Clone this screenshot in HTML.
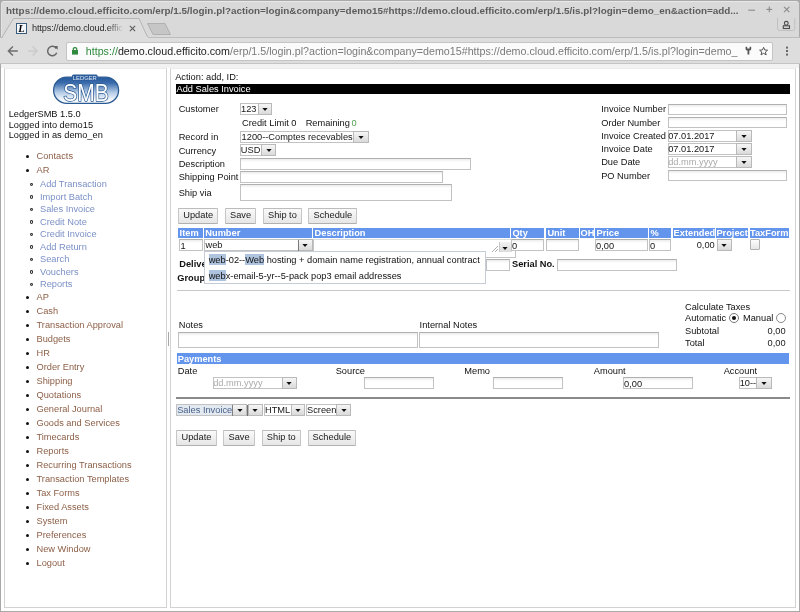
<!DOCTYPE html>
<html><head><meta charset="utf-8"><style>
html,body{margin:0;padding:0;width:800px;height:612px;overflow:hidden;background:#fff}
body{position:relative;font-family:"Liberation Sans",sans-serif}
.r{position:absolute}
.t{position:absolute;white-space:nowrap;line-height:1;font-family:"Liberation Sans",sans-serif}
.hl{background:#aec3de;padding:1px 0 0}
</style></head><body><div id="w" style="position:absolute;left:0;top:0;width:800px;height:612px;will-change:transform">
<div class="r" style="left:0px;top:0px;width:800px;height:64px;background:#a9a9a9"></div>
<div class="r" style="left:0px;top:0px;width:800px;height:64px;background:#d9d9d9;border:1px solid #a9a9a9;border-bottom:0;border-radius:4px 4px 0 0;box-sizing:border-box;box-shadow:inset 0 1px 0 #e8e8e8, inset 1px 0 0 #e2e2e2"></div>
<div class="r" style="left:0px;top:0px;width:1px;height:612px;background:#a9a9a9"></div>
<div class="r" style="left:799px;top:0px;width:1px;height:612px;background:#a9a9a9"></div>
<div class="t" style="left:6px;top:6.02px;font-size:9.88px;color:#5c5c5c;font-weight:bold;">https://demo.cloud.efficito.com/erp/1.5/login.pl?action=login&amp;company=demo15#https://demo.cloud.efficito.com/erp/1.5/is.pl?login=demo_en&amp;action=add...</div>
<svg class="r" style="left:740px;top:0px" width="60" height="40" viewBox="740 0 60 40">
<g stroke="#8a8a8a" stroke-width="1.1" fill="none">
<line x1="748.3" y1="10.2" x2="755" y2="10.2"/>
<line x1="769.3" y1="6.6" x2="769.3" y2="12.2"/><line x1="766.4" y1="9.4" x2="772.2" y2="9.4"/>
<line x1="784" y1="6.8" x2="789.4" y2="12.1"/><line x1="789.4" y1="6.8" x2="784" y2="12.1"/>
</g>
<path d="M777.5 18 V28.5 Q777.5 30.5 779.5 30.5 H792.8 Q794.8 30.5 794.8 28.5 V18" fill="none" stroke="#bdbdbd" stroke-width="0.9"/>
<circle cx="786.3" cy="23.3" r="1.9" fill="none" stroke="#4a4a4a" stroke-width="1.1"/>
<rect x="783.3" y="25.8" width="6.2" height="2.7" fill="none" stroke="#4a4a4a" stroke-width="1.1"/>
</svg>
<svg class="r" style="left:0;top:17px" width="800" height="21" viewBox="0 17 800 21">
<path d="M1.5 38 L13.5 18.5 L139 18.5 L148 38" fill="#dddddd" stroke="#b4b4b4" stroke-width="1"/>
<path d="M147.5 23.5 L165 23.5 L170.5 34.5 L153 34.5 Z" fill="#c6c6c6" stroke="#b0b0b0" stroke-width="1"/>
</svg>
<div class="r" style="left:16px;top:23px;width:11px;height:11px;background:#f4f8fc;border:1px solid #3b5b7a;box-sizing:border-box"></div>
<div class="t" style="left:18.2px;top:23.85px;font-size:10.5px;color:#000;font-weight:bold;font-family:'Liberation Serif';font-style:italic">L</div>
<div class="t" style="left:32px;top:23.54px;font-size:9.2px;color:#2a2a2a;letter-spacing:-0.15px;width:92px;height:12px;overflow:hidden;-webkit-mask-image:linear-gradient(90deg,#000 82%,transparent)">https://demo.cloud.effic</div>
<svg class="r" style="left:128px;top:24px" width="10" height="10" viewBox="0 0 10 10">
<g stroke="#5a5a5a" stroke-width="1.1"><line x1="1.9" y1="1.9" x2="7.1" y2="7.1"/><line x1="7.1" y1="1.9" x2="1.9" y2="7.1"/></g></svg>
<div class="r" style="left:0px;top:37px;width:800px;height:27px;background:#dddddd"></div>
<div class="r" style="left:0px;top:37px;width:3px;height:1px;background:#bdbdbd"></div>
<div class="r" style="left:148px;top:37px;width:652px;height:1px;background:#bdbdbd"></div>
<div class="r" style="left:0px;top:63px;width:800px;height:1px;background:#c4c4c4"></div>
<svg class="r" style="left:0;top:40px" width="64" height="22" viewBox="0 40 64 22">
<g fill="none" stroke-width="1.5" stroke-linecap="butt">
<path d="M8.8 51 H17.8 M12.9 46.4 L8.4 51 L12.9 55.6" stroke="#6e6e6e"/>
<path d="M28 51 H37 M32.6 46.4 L37.1 51 L32.6 55.6" stroke="#cbcbcb"/>
<path d="M56.3 48.5 A4.7 4.7 0 1 0 56.7 52.8" stroke="#666"/>
</g>
<path d="M53.9 45.9 L57.7 45.9 L57.7 49.7 Z" fill="#666"/>
</svg>
<div class="r" style="left:65.5px;top:41.5px;width:707.5px;height:19.0px;background:#fbfbfb;border:1px solid #c4c4c4;box-sizing:border-box;border-radius:2px"></div>
<svg class="r" style="left:70px;top:45px" width="10" height="11" viewBox="0 0 10 11">
<path d="M3.3 5 V3.6 A1.9 1.9 0 0 1 6.7 3.6 V5" fill="none" stroke="#2f8a3e" stroke-width="1.2"/>
<rect x="2" y="5" width="6" height="4.6" fill="#2f8a3e"/></svg>
<div class="t" style="left:85.8px;top:45.70px;font-size:10.7px;color:#777;width:654px;height:14px;overflow:hidden"><span style="color:#2f8a3e">https://</span><span style="color:#222">demo.cloud.efficito.com</span><span style="color:#7a7a7a">/erp/1.5/login.pl?action=login&amp;company=demo15#https://demo.cloud.efficito.com/erp/1.5/is.pl?login=demo_</span></div>
<svg class="r" style="left:736px;top:40px" width="64" height="22" viewBox="736 40 64 22">
<path d="M745.6 46.8 H747.2 V48.6 H749.6 V46.8 H751.2 V49.2 Q751.2 50.6 749.3 50.6 V54.6 H747.5 V50.6 Q745.6 50.6 745.6 49.2 Z" fill="#555"/>
<path d="M763.6 47.3 L764.8 50 L767.6 50.2 L765.4 52 L766.2 54.9 L763.6 53.3 L761 54.9 L761.8 52 L759.6 50.2 L762.4 50 Z" fill="none" stroke="#555" stroke-width="1" stroke-linejoin="miter"/>
<rect x="786" y="46.6" width="2" height="2" fill="#666"/><rect x="786" y="50" width="2" height="2" fill="#666"/><rect x="786" y="53.6" width="2" height="2" fill="#666"/>
</svg>
<div class="r" style="left:1px;top:64px;width:798px;height:547px;background:#fff"></div>
<div class="r" style="left:1px;top:64px;width:798px;height:4px;background:#f2f2f2"></div>
<div class="r" style="left:1px;top:611px;width:798px;height:1px;background:#a9a9a9"></div>
<div class="r" style="left:4px;top:68px;width:163px;height:540px;border:1px solid #d2d2d2;border-top-color:#ececec;box-sizing:border-box;background:#fff"></div>
<div class="r" style="left:170px;top:68px;width:626px;height:540px;border:1px solid #d2d2d2;border-top-color:#ececec;box-sizing:border-box;background:#fff"></div>
<div class="r" style="left:168px;top:332px;width:1px;height:14px;background:#a8a8a8"></div>
<svg class="r" style="left:50px;top:70px" width="72" height="36" viewBox="50 70 72 36">
<defs><linearGradient id="lg" x1="0" y1="0" x2="0" y2="1">
<stop offset="0" stop-color="#26599a"/><stop offset="0.22" stop-color="#3a6cad"/><stop offset="0.58" stop-color="#b3cbe6"/><stop offset="0.85" stop-color="#f2f6fb"/><stop offset="1" stop-color="#fafcfe"/></linearGradient></defs>
<rect x="53.6" y="77.2" width="65" height="26.2" rx="13.1" fill="url(#lg)" stroke="#2a5a92" stroke-width="1.3"/>
<path d="M72 80.5 V76 Q72 74.5 73.5 74.5 H96.2 Q97.7 74.5 97.7 76 V80.5 Z" fill="#2c5d9b"/>
<text x="72.8" y="79.9" textLength="24" lengthAdjust="spacingAndGlyphs" font-family="Liberation Sans" font-size="5.6" fill="#dce8f6">LEDGER</text>
<text x="63.2" y="100.6" textLength="45.5" lengthAdjust="spacingAndGlyphs" font-family="Liberation Sans" font-size="23.5" fill="#2a5a92" stroke="#2a5a92" stroke-width="1.5" stroke-linejoin="round">SMB</text><text x="63.2" y="100.6" textLength="45.5" lengthAdjust="spacingAndGlyphs" font-family="Liberation Sans" font-size="23.5" fill="#fff">SMB</text>
</svg>
<div class="t" style="left:8.7px;top:110.00px;font-size:9.25px;color:#111;">LedgerSMB 1.5.0</div>
<div class="t" style="left:8.7px;top:121.00px;font-size:9.25px;color:#111;">Logged into demo15</div>
<div class="t" style="left:8.7px;top:131.30px;font-size:9.25px;color:#111;">Logged in as demo_en</div>
<div class="r" style="left:25.5px;top:154.8px;width:3.0px;height:3.0px;background:#111;border-radius:50%"></div>
<div class="t" style="left:36.5px;top:152.00px;font-size:9.25px;color:#8c5f47;">Contacts</div>
<div class="r" style="left:25.5px;top:168.8px;width:3.0px;height:3.0px;background:#111;border-radius:50%"></div>
<div class="t" style="left:36.5px;top:166.00px;font-size:9.25px;color:#8c5f47;">AR</div>
<div class="r" style="left:29.5px;top:182.8px;width:3.700000000000003px;height:3.5999999999999943px;border:1px solid #333;border-radius:50%;box-sizing:border-box"></div>
<div class="t" style="left:40px;top:180.00px;font-size:9.25px;color:#7b90c6;">Add Transaction</div>
<div class="r" style="left:29.5px;top:195.3px;width:3.700000000000003px;height:3.5999999999999943px;border:1px solid #333;border-radius:50%;box-sizing:border-box"></div>
<div class="t" style="left:40px;top:192.50px;font-size:9.25px;color:#7b90c6;">Import Batch</div>
<div class="r" style="left:29.5px;top:207.8px;width:3.700000000000003px;height:3.5999999999999943px;border:1px solid #333;border-radius:50%;box-sizing:border-box"></div>
<div class="t" style="left:40px;top:205.00px;font-size:9.25px;color:#7b90c6;">Sales Invoice</div>
<div class="r" style="left:29.5px;top:220.3px;width:3.700000000000003px;height:3.5999999999999943px;border:1px solid #333;border-radius:50%;box-sizing:border-box"></div>
<div class="t" style="left:40px;top:217.50px;font-size:9.25px;color:#7b90c6;">Credit Note</div>
<div class="r" style="left:29.5px;top:232.8px;width:3.700000000000003px;height:3.5999999999999943px;border:1px solid #333;border-radius:50%;box-sizing:border-box"></div>
<div class="t" style="left:40px;top:230.00px;font-size:9.25px;color:#7b90c6;">Credit Invoice</div>
<div class="r" style="left:29.5px;top:245.3px;width:3.700000000000003px;height:3.5999999999999943px;border:1px solid #333;border-radius:50%;box-sizing:border-box"></div>
<div class="t" style="left:40px;top:242.50px;font-size:9.25px;color:#7b90c6;">Add Return</div>
<div class="r" style="left:29.5px;top:257.8px;width:3.700000000000003px;height:3.599999999999966px;border:1px solid #333;border-radius:50%;box-sizing:border-box"></div>
<div class="t" style="left:40px;top:255.00px;font-size:9.25px;color:#7b90c6;">Search</div>
<div class="r" style="left:29.5px;top:270.3px;width:3.700000000000003px;height:3.599999999999966px;border:1px solid #333;border-radius:50%;box-sizing:border-box"></div>
<div class="t" style="left:40px;top:267.50px;font-size:9.25px;color:#7b90c6;">Vouchers</div>
<div class="r" style="left:29.5px;top:282.8px;width:3.700000000000003px;height:3.599999999999966px;border:1px solid #333;border-radius:50%;box-sizing:border-box"></div>
<div class="t" style="left:40px;top:280.00px;font-size:9.25px;color:#7b90c6;">Reports</div>
<div class="r" style="left:25.5px;top:296.1px;width:3.0px;height:3.0px;background:#111;border-radius:50%"></div>
<div class="t" style="left:36.5px;top:293.30px;font-size:9.25px;color:#8c5f47;">AP</div>
<div class="r" style="left:25.5px;top:310.07000000000005px;width:3.0px;height:3.0px;background:#111;border-radius:50%"></div>
<div class="t" style="left:36.5px;top:307.27px;font-size:9.25px;color:#8c5f47;">Cash</div>
<div class="r" style="left:25.5px;top:324.04px;width:3.0px;height:3.0px;background:#111;border-radius:50%"></div>
<div class="t" style="left:36.5px;top:321.24px;font-size:9.25px;color:#8c5f47;">Transaction Approval</div>
<div class="r" style="left:25.5px;top:338.01000000000005px;width:3.0px;height:3.0px;background:#111;border-radius:50%"></div>
<div class="t" style="left:36.5px;top:335.21px;font-size:9.25px;color:#8c5f47;">Budgets</div>
<div class="r" style="left:25.5px;top:351.98px;width:3.0px;height:3.0px;background:#111;border-radius:50%"></div>
<div class="t" style="left:36.5px;top:349.18px;font-size:9.25px;color:#8c5f47;">HR</div>
<div class="r" style="left:25.5px;top:365.95000000000005px;width:3.0px;height:3.0px;background:#111;border-radius:50%"></div>
<div class="t" style="left:36.5px;top:363.15px;font-size:9.25px;color:#8c5f47;">Order Entry</div>
<div class="r" style="left:25.5px;top:379.92px;width:3.0px;height:3.0px;background:#111;border-radius:50%"></div>
<div class="t" style="left:36.5px;top:377.12px;font-size:9.25px;color:#8c5f47;">Shipping</div>
<div class="r" style="left:25.5px;top:393.89000000000004px;width:3.0px;height:3.0px;background:#111;border-radius:50%"></div>
<div class="t" style="left:36.5px;top:391.09px;font-size:9.25px;color:#8c5f47;">Quotations</div>
<div class="r" style="left:25.5px;top:407.86px;width:3.0px;height:3.0px;background:#111;border-radius:50%"></div>
<div class="t" style="left:36.5px;top:405.06px;font-size:9.25px;color:#8c5f47;">General Journal</div>
<div class="r" style="left:25.5px;top:421.83000000000004px;width:3.0px;height:3.0px;background:#111;border-radius:50%"></div>
<div class="t" style="left:36.5px;top:419.03px;font-size:9.25px;color:#8c5f47;">Goods and Services</div>
<div class="r" style="left:25.5px;top:435.8px;width:3.0px;height:3.0px;background:#111;border-radius:50%"></div>
<div class="t" style="left:36.5px;top:433.00px;font-size:9.25px;color:#8c5f47;">Timecards</div>
<div class="r" style="left:25.5px;top:449.77000000000004px;width:3.0px;height:3.0px;background:#111;border-radius:50%"></div>
<div class="t" style="left:36.5px;top:446.97px;font-size:9.25px;color:#8c5f47;">Reports</div>
<div class="r" style="left:25.5px;top:463.74000000000007px;width:3.0px;height:3.0px;background:#111;border-radius:50%"></div>
<div class="t" style="left:36.5px;top:460.94px;font-size:9.25px;color:#8c5f47;">Recurring Transactions</div>
<div class="r" style="left:25.5px;top:477.71000000000004px;width:3.0px;height:3.0px;background:#111;border-radius:50%"></div>
<div class="t" style="left:36.5px;top:474.91px;font-size:9.25px;color:#8c5f47;">Transaction Templates</div>
<div class="r" style="left:25.5px;top:491.68px;width:3.0px;height:3.0px;background:#111;border-radius:50%"></div>
<div class="t" style="left:36.5px;top:488.88px;font-size:9.25px;color:#8c5f47;">Tax Forms</div>
<div class="r" style="left:25.5px;top:505.65000000000003px;width:3.0px;height:3.0px;background:#111;border-radius:50%"></div>
<div class="t" style="left:36.5px;top:502.85px;font-size:9.25px;color:#8c5f47;">Fixed Assets</div>
<div class="r" style="left:25.5px;top:519.62px;width:3.0px;height:3.0px;background:#111;border-radius:50%"></div>
<div class="t" style="left:36.5px;top:516.82px;font-size:9.25px;color:#8c5f47;">System</div>
<div class="r" style="left:25.5px;top:533.5899999999999px;width:3.0px;height:3.0px;background:#111;border-radius:50%"></div>
<div class="t" style="left:36.5px;top:530.79px;font-size:9.25px;color:#8c5f47;">Preferences</div>
<div class="r" style="left:25.5px;top:547.56px;width:3.0px;height:3.0px;background:#111;border-radius:50%"></div>
<div class="t" style="left:36.5px;top:544.76px;font-size:9.25px;color:#8c5f47;">New Window</div>
<div class="r" style="left:25.5px;top:561.53px;width:3.0px;height:3.0px;background:#111;border-radius:50%"></div>
<div class="t" style="left:36.5px;top:558.73px;font-size:9.25px;color:#8c5f47;">Logout</div>
<div class="t" style="left:175.2px;top:73.30px;font-size:9.25px;color:#111;">Action: add, ID:</div>
<div class="r" style="left:176px;top:84px;width:614px;height:10px;background:#000"></div>
<div class="t" style="left:176.5px;top:85.30px;font-size:9.25px;color:#fff;">Add Sales Invoice</div>
<div class="t" style="left:178.7px;top:105.30px;font-size:9.25px;color:#111;">Customer</div>
<div class="r" style="left:240px;top:103px;width:32px;height:12px;border:1px solid #c2c2c2;box-sizing:border-box;background:#fff"></div>
<div class="r" style="left:257.5px;top:103px;width:14.5px;height:12px;border:1px solid #b9b9b9;box-sizing:border-box;background:linear-gradient(#f6f6f6,#dadada)"></div>
<svg class="r" style="left:260.75px;top:105.00px" width="8" height="8" viewBox="0 0 8 8"><path d="M1.4 3.1 H6.6 L4 6.1 Z" fill="#111"/></svg>
<div class="t" style="left:241.0px;top:105.40px;font-size:9.25px;color:#161616;">123</div>
<div class="t" style="left:242px;top:119.00px;font-size:9.25px;color:#111;">Credit Limit 0</div>
<div class="t" style="left:305.7px;top:119.00px;font-size:9.25px;color:#111;">Remaining<span style="color:#4f9f4f;margin-left:1.6px">0</span></div>
<div class="t" style="left:178.7px;top:133.00px;font-size:9.25px;color:#111;">Record in</div>
<div class="r" style="left:240px;top:131px;width:128.7px;height:12px;border:1px solid #c2c2c2;box-sizing:border-box;background:#fff"></div>
<div class="r" style="left:353px;top:131px;width:15.699999999999989px;height:12px;border:1px solid #b9b9b9;box-sizing:border-box;background:linear-gradient(#f6f6f6,#dadada)"></div>
<svg class="r" style="left:356.85px;top:133.00px" width="8" height="8" viewBox="0 0 8 8"><path d="M1.4 3.1 H6.6 L4 6.1 Z" fill="#111"/></svg>
<div class="t" style="left:241.6px;top:133.40px;font-size:9.25px;color:#161616;">1200--Comptes recevables</div>
<div class="t" style="left:178.7px;top:146.70px;font-size:9.25px;color:#111;">Currency</div>
<div class="r" style="left:240px;top:144px;width:36px;height:12px;border:1px solid #c2c2c2;box-sizing:border-box;background:#fff"></div>
<div class="r" style="left:261px;top:144px;width:15px;height:12px;border:1px solid #b9b9b9;box-sizing:border-box;background:linear-gradient(#f6f6f6,#dadada)"></div>
<svg class="r" style="left:264.50px;top:146.00px" width="8" height="8" viewBox="0 0 8 8"><path d="M1.4 3.1 H6.6 L4 6.1 Z" fill="#111"/></svg>
<div class="t" style="left:240.8px;top:146.40px;font-size:9.25px;color:#161616;">USD</div>
<div class="t" style="left:178.7px;top:160.00px;font-size:9.25px;color:#111;">Description</div>
<div class="r" style="left:240px;top:158px;width:231px;height:12px;border:1px solid #c2c2c2;border-top-color:#b0b0b0;box-sizing:border-box;background:linear-gradient(#ececec,#fff 3px);"></div>
<div class="t" style="left:178.7px;top:172.60px;font-size:9.25px;color:#111;">Shipping Point</div>
<div class="r" style="left:240px;top:171px;width:203px;height:12px;border:1px solid #c2c2c2;border-top-color:#b0b0b0;box-sizing:border-box;background:linear-gradient(#ececec,#fff 3px);"></div>
<div class="t" style="left:178.7px;top:189.00px;font-size:9.25px;color:#111;">Ship via</div>
<div class="r" style="left:240px;top:184px;width:212px;height:17px;border:1px solid #c2c2c2;border-top-color:#b0b0b0;box-sizing:border-box;background:linear-gradient(#ececec,#fff 3px);"></div>
<div class="t" style="left:601.2px;top:105.00px;font-size:9.25px;color:#111;">Invoice Number</div>
<div class="r" style="left:668.2px;top:103.5px;width:119.29999999999995px;height:11.5px;border:1px solid #c2c2c2;border-top-color:#b0b0b0;box-sizing:border-box;background:linear-gradient(#ececec,#fff 3px);"></div>
<div class="t" style="left:601.2px;top:118.50px;font-size:9.25px;color:#111;">Order Number</div>
<div class="r" style="left:668.2px;top:116.7px;width:119.29999999999995px;height:11.799999999999997px;border:1px solid #c2c2c2;border-top-color:#b0b0b0;box-sizing:border-box;background:linear-gradient(#ececec,#fff 3px);"></div>
<div class="t" style="left:601.2px;top:131.70px;font-size:9.25px;color:#111;">Invoice Created</div>
<div class="r" style="left:668.2px;top:130px;width:83.39999999999998px;height:11.699999999999989px;border:1px solid #c2c2c2;box-sizing:border-box;background:#fff"></div>
<div class="r" style="left:736.2px;top:130px;width:15.399999999999977px;height:11.699999999999989px;border:1px solid #b9b9b9;box-sizing:border-box;background:linear-gradient(#f6f6f6,#dadada)"></div>
<svg class="r" style="left:739.90px;top:131.85px" width="8" height="8" viewBox="0 0 8 8"><path d="M1.4 3.1 H6.6 L4 6.1 Z" fill="#111"/></svg>
<div class="t" style="left:668.2px;top:132.10px;font-size:9.25px;color:#161616;">07.01.2017</div>
<div class="t" style="left:601.2px;top:144.70px;font-size:9.25px;color:#111;">Invoice Date</div>
<div class="r" style="left:668.2px;top:143.2px;width:83.39999999999998px;height:11.5px;border:1px solid #c2c2c2;box-sizing:border-box;background:#fff"></div>
<div class="r" style="left:736.2px;top:143.2px;width:15.399999999999977px;height:11.5px;border:1px solid #b9b9b9;box-sizing:border-box;background:linear-gradient(#f6f6f6,#dadada)"></div>
<svg class="r" style="left:739.90px;top:144.95px" width="8" height="8" viewBox="0 0 8 8"><path d="M1.4 3.1 H6.6 L4 6.1 Z" fill="#111"/></svg>
<div class="t" style="left:668.2px;top:145.10px;font-size:9.25px;color:#161616;">07.01.2017</div>
<div class="t" style="left:601.2px;top:158.00px;font-size:9.25px;color:#111;">Due Date</div>
<div class="r" style="left:668.2px;top:156.3px;width:83.39999999999998px;height:11.699999999999989px;border:1px solid #c2c2c2;box-sizing:border-box;background:#fff"></div>
<div class="r" style="left:736.2px;top:156.3px;width:15.399999999999977px;height:11.699999999999989px;border:1px solid #b9b9b9;box-sizing:border-box;background:linear-gradient(#f6f6f6,#dadada)"></div>
<svg class="r" style="left:739.90px;top:158.15px" width="8" height="8" viewBox="0 0 8 8"><path d="M1.4 3.1 H6.6 L4 6.1 Z" fill="#111"/></svg>
<div class="t" style="left:668.2px;top:158.40px;font-size:9.25px;color:#aaa;">dd.mm.yyyy</div>
<div class="t" style="left:601.2px;top:171.50px;font-size:9.25px;color:#111;">PO Number</div>
<div class="r" style="left:668.2px;top:169.7px;width:119.29999999999995px;height:11.5px;border:1px solid #c2c2c2;border-top-color:#b0b0b0;box-sizing:border-box;background:linear-gradient(#ececec,#fff 3px);"></div>
<div class="r" style="left:178.2px;top:208px;width:40.0px;height:16px;border:1px solid #c6c6c6;border-top-color:#bcbcbc;border-bottom-color:#b0b0b0;box-sizing:border-box;border-radius:1px;background:linear-gradient(#f9f9f9,#e6e6e6)"></div>
<div class="t" style="left:178.2px;width:40.0px;text-align:center;top:211.00px;font-size:9.25px;color:#1a1a1a">Update</div>
<div class="r" style="left:225px;top:208px;width:31.19999999999999px;height:16px;border:1px solid #c6c6c6;border-top-color:#bcbcbc;border-bottom-color:#b0b0b0;box-sizing:border-box;border-radius:1px;background:linear-gradient(#f9f9f9,#e6e6e6)"></div>
<div class="t" style="left:225px;width:31.19999999999999px;text-align:center;top:211.00px;font-size:9.25px;color:#1a1a1a">Save</div>
<div class="r" style="left:263.2px;top:208px;width:38.5px;height:16px;border:1px solid #c6c6c6;border-top-color:#bcbcbc;border-bottom-color:#b0b0b0;box-sizing:border-box;border-radius:1px;background:linear-gradient(#f9f9f9,#e6e6e6)"></div>
<div class="t" style="left:263.2px;width:38.5px;text-align:center;top:211.00px;font-size:9.25px;color:#1a1a1a">Ship to</div>
<div class="r" style="left:308.2px;top:208px;width:49.30000000000001px;height:16px;border:1px solid #c6c6c6;border-top-color:#bcbcbc;border-bottom-color:#b0b0b0;box-sizing:border-box;border-radius:1px;background:linear-gradient(#f9f9f9,#e6e6e6)"></div>
<div class="t" style="left:308.2px;width:49.30000000000001px;text-align:center;top:211.00px;font-size:9.25px;color:#1a1a1a">Schedule</div>
<div class="r" style="left:178px;top:228px;width:24.5px;height:9.800000000000011px;background:#6495ed"></div>
<div class="t" style="left:179.6px;top:228.50px;font-size:9.25px;color:#fff;font-weight:bold;">Item</div>
<div class="r" style="left:203.7px;top:228px;width:108.0px;height:9.800000000000011px;background:#6495ed"></div>
<div class="t" style="left:205.29999999999998px;top:228.50px;font-size:9.25px;color:#fff;font-weight:bold;">Number</div>
<div class="r" style="left:313px;top:228px;width:196.5px;height:9.800000000000011px;background:#6495ed"></div>
<div class="t" style="left:314.6px;top:228.50px;font-size:9.25px;color:#fff;font-weight:bold;">Description</div>
<div class="r" style="left:510.8px;top:228px;width:33.69999999999999px;height:9.800000000000011px;background:#6495ed"></div>
<div class="t" style="left:512.4px;top:228.50px;font-size:9.25px;color:#fff;font-weight:bold;">Qty</div>
<div class="r" style="left:545.8px;top:228px;width:33.200000000000045px;height:9.800000000000011px;background:#6495ed"></div>
<div class="t" style="left:547.4px;top:228.50px;font-size:9.25px;color:#fff;font-weight:bold;">Unit</div>
<div class="r" style="left:580.2px;top:228px;width:13.399999999999977px;height:9.800000000000011px;background:#6495ed"></div>
<div class="t" style="left:580.6px;top:228.50px;font-size:9.25px;color:#fff;font-weight:bold;">OH</div>
<div class="r" style="left:594.9px;top:228px;width:52.80000000000007px;height:9.800000000000011px;background:#6495ed"></div>
<div class="t" style="left:596.5px;top:228.50px;font-size:9.25px;color:#fff;font-weight:bold;">Price</div>
<div class="r" style="left:649px;top:228px;width:22.399999999999977px;height:9.800000000000011px;background:#6495ed"></div>
<div class="t" style="left:650.6px;top:228.50px;font-size:9.25px;color:#fff;font-weight:bold;">%</div>
<div class="r" style="left:673.2px;top:228px;width:41.5px;height:9.800000000000011px;background:#6495ed"></div>
<div class="t" style="left:673.6px;top:228.50px;font-size:9.25px;color:#fff;font-weight:bold;">Extended</div>
<div class="r" style="left:716px;top:228px;width:32.299999999999955px;height:9.800000000000011px;background:#6495ed"></div>
<div class="t" style="left:716.4px;top:228.50px;font-size:9.25px;color:#fff;font-weight:bold;">Project</div>
<div class="r" style="left:749.6px;top:228px;width:39.10000000000002px;height:9.800000000000011px;background:#6495ed"></div>
<div class="t" style="left:750.0px;top:228.50px;font-size:9.25px;color:#fff;font-weight:bold;">TaxForm</div>
<div class="r" style="left:179px;top:239px;width:23.5px;height:12px;border:1px solid #c2c2c2;border-top-color:#b0b0b0;box-sizing:border-box;background:linear-gradient(#ececec,#fff 3px);"></div>
<div class="t" style="left:180.6px;top:241.80px;font-size:9.25px;color:#161616;">1</div>
<div class="r" style="left:203.7px;top:239px;width:108.80000000000001px;height:12px;border:1px solid #c2c2c2;box-sizing:border-box;background:#fff"></div>
<div class="r" style="left:298px;top:239px;width:14.5px;height:12px;border:1px solid #b9b9b9;box-sizing:border-box;background:linear-gradient(#f6f6f6,#dadada)"></div>
<svg class="r" style="left:301.25px;top:241.00px" width="8" height="8" viewBox="0 0 8 8"><path d="M1.4 3.1 H6.6 L4 6.1 Z" fill="#111"/></svg>
<div class="t" style="left:205.5px;top:241.40px;font-size:9.25px;color:#161616;">web</div>
<div class="r" style="left:298px;top:239.5px;width:1px;height:11.0px;background:#7a7a7a"></div>
<div class="r" style="left:313px;top:239px;width:202.5px;height:18.5px;border:1px solid #c4c4c4;border-top-color:#dddddd;box-sizing:border-box;background:#fff"></div>
<svg class="r" style="left:490px;top:244px" width="10" height="10" viewBox="0 0 10 10"><g stroke="#999" stroke-width="0.8"><line x1="2" y1="8" x2="8" y2="2"/><line x1="5" y1="8" x2="8" y2="5"/></g></svg>
<div class="r" style="left:498.5px;top:242.4px;width:12.5px;height:10.099999999999994px;background:linear-gradient(#f2f2f2,#dcdcdc);border-left:1px solid #c8c8c8"></div>
<svg class="r" style="left:500.80px;top:243.50px" width="8" height="8" viewBox="0 0 8 8"><path d="M1.4 3.1 H6.6 L4 6.1 Z" fill="#111"/></svg>
<div class="r" style="left:511px;top:239px;width:33px;height:12px;border:1px solid #c2c2c2;border-top-color:#b0b0b0;box-sizing:border-box;background:linear-gradient(#ececec,#fff 3px);"></div>
<div class="t" style="left:512.1px;top:241.80px;font-size:9.25px;color:#161616;">0</div>
<div class="r" style="left:546px;top:239px;width:32.5px;height:12px;border:1px solid #c2c2c2;border-top-color:#b0b0b0;box-sizing:border-box;background:linear-gradient(#ececec,#fff 3px);"></div>
<div class="r" style="left:595px;top:239px;width:52.5px;height:12px;border:1px solid #c2c2c2;border-top-color:#b0b0b0;box-sizing:border-box;background:linear-gradient(#ececec,#fff 3px);"></div>
<div class="t" style="left:596.1px;top:241.80px;font-size:9.25px;color:#161616;">0,00</div>
<div class="r" style="left:649px;top:239px;width:22px;height:12px;border:1px solid #c2c2c2;border-top-color:#b0b0b0;box-sizing:border-box;background:linear-gradient(#ececec,#fff 3px);"></div>
<div class="t" style="left:650.1px;top:241.80px;font-size:9.25px;color:#161616;">0</div>
<div class="t" style="left:680px;width:34.7px;text-align:right;top:241.00px;font-size:9.25px;color:#222">0,00</div>
<div class="r" style="left:716.5px;top:239px;width:15.200000000000045px;height:12px;border:1px solid #b9b9b9;box-sizing:border-box;background:linear-gradient(#f6f6f6,#dadada)"></div>
<svg class="r" style="left:720.10px;top:240.80px" width="8" height="8" viewBox="0 0 8 8"><path d="M1.4 3.1 H6.6 L4 6.1 Z" fill="#111"/></svg>
<div class="r" style="left:750px;top:239px;width:10px;height:11px;border:1px solid #b2b2b2;box-sizing:border-box;border-radius:1px;background:linear-gradient(#fcfcfc,#e6e6e6)"></div>
<div class="t" style="left:179.3px;top:260.00px;font-size:9.25px;color:#111;font-weight:bold;">Delivery Date</div>
<div class="r" style="left:486px;top:259px;width:24px;height:12px;border:1px solid #c2c2c2;border-top-color:#b0b0b0;box-sizing:border-box;background:linear-gradient(#ececec,#fff 3px);"></div>
<div class="t" style="left:512px;top:259.80px;font-size:9.25px;color:#111;font-weight:bold;">Serial No.</div>
<div class="r" style="left:557px;top:259px;width:119.5px;height:12px;border:1px solid #c2c2c2;border-top-color:#b0b0b0;box-sizing:border-box;background:linear-gradient(#ececec,#fff 3px);"></div>
<div class="t" style="left:177.3px;top:273.50px;font-size:9.25px;color:#111;font-weight:bold;">Group</div>
<div class="r" style="left:204px;top:251px;width:282px;height:33px;border:1px solid #c5ccd6;box-sizing:border-box;background:#fff"></div>
<div class="t" style="left:208.7px;top:255.60px;font-size:9.25px;color:#111;"><span class="hl">web</span>-02--<span class="hl">Web</span> hosting + domain name registration, annual contract</div>
<div class="t" style="left:208.7px;top:272.00px;font-size:9.25px;color:#111;"><span class="hl">web</span>x-email-5-yr--5-pack pop3 email addresses</div>
<div class="r" style="left:176.8px;top:290px;width:613.2px;height:1px;background:#c8c8c8"></div>
<div class="t" style="left:685px;top:302.60px;font-size:9.25px;color:#111;">Calculate Taxes</div>
<div class="t" style="left:685px;top:314.20px;font-size:9.25px;color:#111;">Automatic</div>
<div class="r" style="left:729px;top:313px;width:10px;height:10px;border:1px solid #777;border-radius:50%;box-sizing:border-box;background:#fff"></div>
<div class="r" style="left:731.8px;top:315.8px;width:4.400000000000091px;height:4.399999999999977px;background:#111;border-radius:50%"></div>
<div class="t" style="left:743px;top:314.20px;font-size:9.25px;color:#111;">Manual</div>
<div class="r" style="left:776px;top:313px;width:10px;height:10px;border:1px solid #888;border-radius:50%;box-sizing:border-box;background:#fff"></div>
<div class="t" style="left:685px;top:326.80px;font-size:9.25px;color:#111;">Subtotal</div>
<div class="t" style="left:740px;width:45.6px;text-align:right;top:326.80px;font-size:9.25px;color:#222">0,00</div>
<div class="t" style="left:685px;top:338.80px;font-size:9.25px;color:#111;">Total</div>
<div class="t" style="left:740px;width:45.6px;text-align:right;top:338.80px;font-size:9.25px;color:#222">0,00</div>
<div class="t" style="left:178.8px;top:321.30px;font-size:9.25px;color:#111;">Notes</div>
<div class="r" style="left:178px;top:332px;width:239.60000000000002px;height:15.600000000000023px;border:1px solid #c2c2c2;border-top-color:#b0b0b0;box-sizing:border-box;background:linear-gradient(#ececec,#fff 3px);"></div>
<div class="t" style="left:419.6px;top:321.30px;font-size:9.25px;color:#111;">Internal Notes</div>
<div class="r" style="left:419px;top:332px;width:240px;height:15.600000000000023px;border:1px solid #c2c2c2;border-top-color:#b0b0b0;box-sizing:border-box;background:linear-gradient(#ececec,#fff 3px);"></div>
<div class="r" style="left:176.5px;top:353.2px;width:612.5px;height:10.400000000000034px;background:#6495ed"></div>
<div class="t" style="left:177.8px;top:355.30px;font-size:9.25px;color:#fff;font-weight:bold;">Payments</div>
<div class="t" style="left:177.8px;top:366.80px;font-size:9.25px;color:#111;">Date</div>
<div class="t" style="left:335.7px;top:366.80px;font-size:9.25px;color:#111;">Source</div>
<div class="t" style="left:464.3px;top:366.80px;font-size:9.25px;color:#111;">Memo</div>
<div class="t" style="left:593.8px;top:366.80px;font-size:9.25px;color:#111;">Amount</div>
<div class="t" style="left:723.7px;top:367.00px;font-size:9.25px;color:#111;">Account</div>
<div class="r" style="left:213.2px;top:377px;width:83.5px;height:12px;border:1px solid #c2c2c2;box-sizing:border-box;background:#fff"></div>
<div class="r" style="left:282px;top:377px;width:14.699999999999989px;height:12px;border:1px solid #b9b9b9;box-sizing:border-box;background:linear-gradient(#f6f6f6,#dadada)"></div>
<svg class="r" style="left:285.35px;top:379.00px" width="8" height="8" viewBox="0 0 8 8"><path d="M1.4 3.1 H6.6 L4 6.1 Z" fill="#111"/></svg>
<div class="t" style="left:213.2px;top:379.40px;font-size:9.25px;color:#aaa;">dd.mm.yyyy</div>
<div class="r" style="left:364.3px;top:377px;width:69.5px;height:12px;border:1px solid #c2c2c2;border-top-color:#b0b0b0;box-sizing:border-box;background:linear-gradient(#ececec,#fff 3px);"></div>
<div class="r" style="left:493.4px;top:377px;width:69.30000000000007px;height:12px;border:1px solid #c2c2c2;border-top-color:#b0b0b0;box-sizing:border-box;background:linear-gradient(#ececec,#fff 3px);"></div>
<div class="r" style="left:623px;top:377px;width:69.5px;height:12px;border:1px solid #c2c2c2;border-top-color:#b0b0b0;box-sizing:border-box;background:linear-gradient(#ececec,#fff 3px);"></div>
<div class="t" style="left:624.1px;top:379.80px;font-size:9.25px;color:#161616;">0,00</div>
<div class="r" style="left:738.7px;top:377px;width:33.0px;height:12px;border:1px solid #c2c2c2;box-sizing:border-box;background:#fff"></div>
<div class="r" style="left:756px;top:377px;width:15.700000000000045px;height:12px;border:1px solid #b9b9b9;box-sizing:border-box;background:linear-gradient(#f6f6f6,#dadada)"></div>
<svg class="r" style="left:759.85px;top:379.00px" width="8" height="8" viewBox="0 0 8 8"><path d="M1.4 3.1 H6.6 L4 6.1 Z" fill="#111"/></svg>
<div class="t" style="left:739.7px;top:379.40px;font-size:9.25px;color:#161616;">10--</div>
<div class="r" style="left:176px;top:397px;width:614px;height:2.3999999999999773px;background:#8a8a8a"></div>
<div class="r" style="left:176.2px;top:404px;width:71.30000000000001px;height:12px;border:1px solid #c2c2c2;box-sizing:border-box;background:#e3e9f1"></div>
<div class="r" style="left:232.2px;top:404px;width:15.300000000000011px;height:12px;border:1px solid #b9b9b9;box-sizing:border-box;background:linear-gradient(#f6f6f6,#dadada)"></div>
<svg class="r" style="left:235.85px;top:406.00px" width="8" height="8" viewBox="0 0 8 8"><path d="M1.4 3.1 H6.6 L4 6.1 Z" fill="#111"/></svg>
<div class="t" style="left:177.2px;top:406.40px;font-size:9.25px;color:#161616;"><span style="color:#4a6288">Sales Invoice</span></div>
<div class="r" style="left:247.5px;top:404px;width:15.300000000000011px;height:12px;border:1px solid #c2c2c2;box-sizing:border-box;background:#fff"></div>
<div class="r" style="left:247.5px;top:404px;width:15.300000000000011px;height:12px;border:1px solid #b9b9b9;box-sizing:border-box;background:linear-gradient(#f6f6f6,#dadada)"></div>
<svg class="r" style="left:251.15px;top:406.00px" width="8" height="8" viewBox="0 0 8 8"><path d="M1.4 3.1 H6.6 L4 6.1 Z" fill="#111"/></svg>
<div class="r" style="left:247px;top:404.5px;width:1px;height:11.0px;background:#707070"></div>
<div class="r" style="left:232px;top:404.5px;width:1px;height:11.0px;background:#808080"></div>
<div class="r" style="left:264px;top:404px;width:41px;height:12px;border:1px solid #c2c2c2;box-sizing:border-box;background:#fff"></div>
<div class="r" style="left:290.7px;top:404px;width:14.300000000000011px;height:12px;border:1px solid #b9b9b9;box-sizing:border-box;background:linear-gradient(#f6f6f6,#dadada)"></div>
<svg class="r" style="left:293.85px;top:406.00px" width="8" height="8" viewBox="0 0 8 8"><path d="M1.4 3.1 H6.6 L4 6.1 Z" fill="#111"/></svg>
<div class="t" style="left:265.0px;top:406.40px;font-size:9.25px;color:#161616;">HTML</div>
<div class="r" style="left:306px;top:404px;width:45.19999999999999px;height:12px;border:1px solid #c2c2c2;box-sizing:border-box;background:#fff"></div>
<div class="r" style="left:336.2px;top:404px;width:15.0px;height:12px;border:1px solid #b9b9b9;box-sizing:border-box;background:linear-gradient(#f6f6f6,#dadada)"></div>
<svg class="r" style="left:339.70px;top:406.00px" width="8" height="8" viewBox="0 0 8 8"><path d="M1.4 3.1 H6.6 L4 6.1 Z" fill="#111"/></svg>
<div class="t" style="left:307.0px;top:406.40px;font-size:9.25px;color:#161616;">Screen</div>
<div class="r" style="left:176.2px;top:430px;width:40.5px;height:16px;border:1px solid #c6c6c6;border-top-color:#bcbcbc;border-bottom-color:#b0b0b0;box-sizing:border-box;border-radius:1px;background:linear-gradient(#f9f9f9,#e6e6e6)"></div>
<div class="t" style="left:176.2px;width:40.5px;text-align:center;top:433.00px;font-size:9.25px;color:#1a1a1a">Update</div>
<div class="r" style="left:223.2px;top:430px;width:31.80000000000001px;height:16px;border:1px solid #c6c6c6;border-top-color:#bcbcbc;border-bottom-color:#b0b0b0;box-sizing:border-box;border-radius:1px;background:linear-gradient(#f9f9f9,#e6e6e6)"></div>
<div class="t" style="left:223.2px;width:31.80000000000001px;text-align:center;top:433.00px;font-size:9.25px;color:#1a1a1a">Save</div>
<div class="r" style="left:262px;top:430px;width:38.5px;height:16px;border:1px solid #c6c6c6;border-top-color:#bcbcbc;border-bottom-color:#b0b0b0;box-sizing:border-box;border-radius:1px;background:linear-gradient(#f9f9f9,#e6e6e6)"></div>
<div class="t" style="left:262px;width:38.5px;text-align:center;top:433.00px;font-size:9.25px;color:#1a1a1a">Ship to</div>
<div class="r" style="left:307.5px;top:430px;width:48.69999999999999px;height:16px;border:1px solid #c6c6c6;border-top-color:#bcbcbc;border-bottom-color:#b0b0b0;box-sizing:border-box;border-radius:1px;background:linear-gradient(#f9f9f9,#e6e6e6)"></div>
<div class="t" style="left:307.5px;width:48.69999999999999px;text-align:center;top:433.00px;font-size:9.25px;color:#1a1a1a">Schedule</div>
</div></body></html>
